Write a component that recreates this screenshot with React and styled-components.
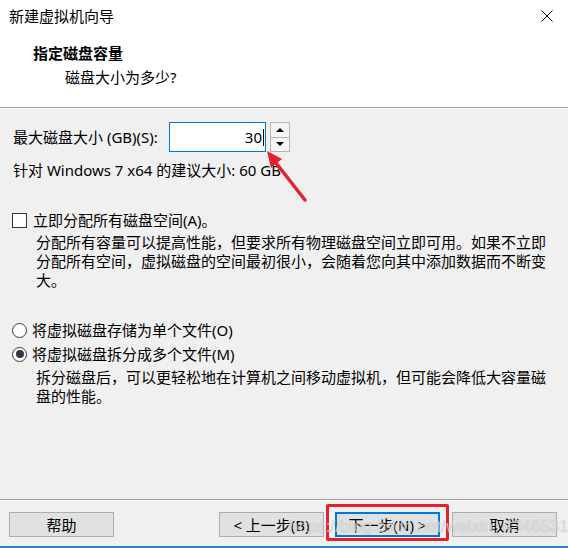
import styled, { createGlobalStyle } from 'styled-components'

const GlobalStyle = createGlobalStyle`
  html, body {
    margin: 0;
    padding: 0;
    background: #f0f0f0;
  }
  body {
    font-family: "Noto Sans", "Noto Sans CJK SC", sans-serif;
    font-size: 15px;
    color: #000;
  }
`

const Window = styled.div`
  position: relative;
  width: 568px;
  height: 548px;
  overflow: hidden;
  background: #f0f0f0;
  display: flex;
  flex-direction: column;
`

const TitleBar = styled.div`
  height: 31px;
  flex: none;
  background: #fff;
  display: flex;
  align-items: center;
  justify-content: space-between;
  padding-left: 9px;
  line-height: 20px;
`

const CloseButton = styled.div`
  width: 42px;
  height: 31px;
  display: flex;
  align-items: center;
  justify-content: center;
`

const Header = styled.div`
  height: 76px;
  flex: none;
  background: #fff;
  padding: 12px 0 0 33px;
  box-sizing: border-box;
`

const HeaderTitle = styled.div`
  font-weight: bold;
  line-height: 20px;
`

const HeaderSub = styled.div`
  line-height: 20px;
  margin-top: 4px;
  padding-left: 32px;
`

const Rule = styled.div`
  flex: none;
  height: 0;
  border-top: 1px solid #a0a0a0;
  border-bottom: 1px solid #fff;
`

const Body = styled.div`
  flex: 1;
  padding: 0 12px;
`

const SizeRow = styled.div`
  margin-top: 13px;
  height: 30px;
  display: flex;
  align-items: center;
  padding-left: 1px;
`

const Label = styled.span`
  width: 156px;
  line-height: 20px;
  flex: none;
`

const NumberInput = styled.div`
  width: 97px;
  height: 30px;
  box-sizing: border-box;
  border: 1px solid #0078d7;
  background: #fff;
  display: flex;
  align-items: center;
  justify-content: flex-end;
  padding-right: 1px;
  line-height: 20px;
`

const Caret = styled.span`
  display: inline-block;
  width: 1px;
  height: 17px;
  background: #000;
  margin-left: 1px;
`

const Spinner = styled.div`
  margin-left: 4px;
  width: 20px;
  height: 30px;
  display: flex;
  flex-direction: column;
`

const SpinButton = styled.div`
  flex: 1;
  box-sizing: border-box;
  border: 1px solid #b4b4b4;
  border-top-width: ${p => (p.$down ? 0 : 1)}px;
  background: #f4f4f4;
  display: flex;
  align-items: center;
  justify-content: center;
`

const Arrow = styled.span`
  width: 0;
  height: 0;
  border-left: 4px solid transparent;
  border-right: 4px solid transparent;
  ${p => (p.$down ? 'border-top: 4px solid #000;' : 'border-bottom: 4px solid #000;')}
`

const Hint = styled.div`
  margin-top: 8px;
  padding-left: 1px;
  line-height: 20px;
`

const OptionRow = styled.div`
  display: flex;
  align-items: center;
  line-height: 20px;
  margin-top: ${p => p.$gap}px;
`

const CheckBox = styled.span`
  width: 15px;
  height: 15px;
  box-sizing: border-box;
  border: 1px solid #333;
  background: #fff;
  margin-right: 6px;
  flex: none;
`

const Radio = styled.span`
  width: 15px;
  height: 15px;
  box-sizing: border-box;
  border-radius: 50%;
  border: 1px solid #3c3c3c;
  background: #fff;
  margin-right: 5px;
  flex: none;
  display: flex;
  align-items: center;
  justify-content: center;

  &::after {
    content: '';
    display: ${p => (p.$checked ? 'block' : 'none')};
    width: 8px;
    height: 8px;
    border-radius: 50%;
    background: #2f3742;
  }
`

const Desc = styled.div`
  margin-top: ${p => p.$gap}px;
  padding-left: 24px;
  line-height: 19px;
`

const Footer = styled.div`
  flex: none;
  height: 45px;
  box-sizing: border-box;
  padding: 11px 11px 0 9px;
  display: flex;
  align-items: flex-start;
`

const Button = styled.div`
  width: 105px;
  height: 25px;
  box-sizing: border-box;
  border: ${p => (p.$primary ? '2px solid #0078d7' : '1px solid #adadad')};
  background: #e1e1e1;
  display: flex;
  align-items: center;
  justify-content: center;
  line-height: 20px;
  margin-left: ${p => p.$gap || 0}px;
`

const Spacer = styled.div`
  flex: 1;
`

const Highlight = styled.div`
  position: relative;
  margin-left: 11px;

  &::after {
    content: '';
    position: absolute;
    top: -8px;
    bottom: -4px;
    left: -9px;
    right: -9px;
    border: 3px solid #e3232c;
    border-radius: 2px;
  }
`

const BottomBar = styled.div`
  flex: none;
  height: 2px;
  background: #2b7fd0;
`

const Annotation = styled.svg`
  position: absolute;
  left: 0;
  top: 0;
  pointer-events: none;
`

const Watermark = styled.div`
  position: absolute;
  left: 289px;
  top: 515px;
  font-family: "Liberation Sans", Arial, sans-serif;
  font-size: 17px;
  line-height: 24px;
  color: rgba(255, 255, 255, 0.55);
  text-shadow: 0 0 1px rgba(120, 120, 120, 0.55);
  white-space: nowrap;
  pointer-events: none;
`

export default function App() {
  return (
    <>
      <GlobalStyle />
      <Window>
        <TitleBar>
          <span>新建虚拟机向导</span>
          <CloseButton>
            <svg width="12" height="12" viewBox="0 0 12 12">
              <path d="M0.5 0.5L11.5 11.5M11.5 0.5L0.5 11.5" stroke="#111" strokeWidth="1" fill="none" />
            </svg>
          </CloseButton>
        </TitleBar>
        <Header>
          <HeaderTitle>指定磁盘容量</HeaderTitle>
          <HeaderSub>磁盘大小为多少?</HeaderSub>
        </Header>
        <Rule />
        <Body>
          <SizeRow>
            <Label>最大磁盘大小 (GB)(S):</Label>
            <NumberInput>
              30<Caret />
            </NumberInput>
            <Spinner>
              <SpinButton>
                <Arrow />
              </SpinButton>
              <SpinButton $down>
                <Arrow $down />
              </SpinButton>
            </Spinner>
          </SizeRow>
          <Hint>针对 Windows 7 x64 的建议大小: 60 GB</Hint>
          <OptionRow $gap={30}>
            <CheckBox />
            立即分配所有磁盘空间(A)。
          </OptionRow>
          <Desc $gap={3}>
            分配所有容量可以提高性能，但要求所有物理磁盘空间立即可用。如果不立即
            <br />
            分配所有空间，虚拟磁盘的空间最初很小，会随着您向其中添加数据而不断变
            <br />
            大。
          </Desc>
          <OptionRow $gap={30}>
            <Radio />
            将虚拟磁盘存储为单个文件(O)
          </OptionRow>
          <OptionRow $gap={4}>
            <Radio $checked />
            将虚拟磁盘拆分成多个文件(M)
          </OptionRow>
          <Desc $gap={4}>
            拆分磁盘后，可以更轻松地在计算机之间移动虚拟机，但可能会降低大容量磁
            <br />
            盘的性能。
          </Desc>
        </Body>
        <Rule />
        <Footer>
          <Button>帮助</Button>
          <Spacer />
          <Button>&lt; 上一步(B)</Button>
          <Highlight>
            <Button $primary>下一步(N) &gt;</Button>
          </Highlight>
          <Button $gap={12}>取消</Button>
        </Footer>
        <BottomBar />
        <Annotation width="568" height="548" viewBox="0 0 568 548">
          <line x1="305" y1="200" x2="276" y2="163" stroke="#e3232c" strokeWidth="3.5" strokeLinecap="round" />
          <polygon points="267,151 282,159 271,168" fill="#e3232c" />
        </Annotation>
        <Watermark>https://blog.csdn.net/weixin_43465312</Watermark>
      </Window>
    </>
  )
}
